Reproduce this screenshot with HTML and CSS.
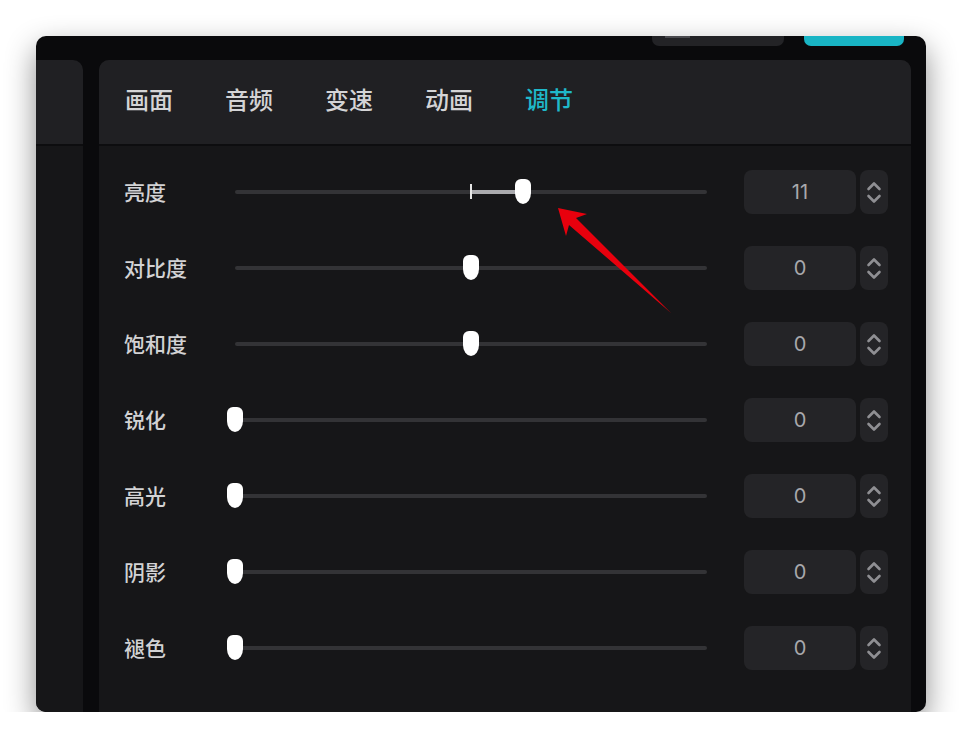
FILE: index.html
```html
<!DOCTYPE html>
<html lang="zh-CN">
<head>
    <meta charset="UTF-8">
    <title>调节</title>
    <link rel="stylesheet" href="styles.css">
</head>
<body>
    <div class="window">
        <div class="titlebar">
            <div class="tb-btn"><span class="tb-icon"></span></div>
            <div class="tb-btn primary"></div>
        </div>
        <div class="main">
            <aside class="side">
                <div class="side-head"></div>
                <div class="side-body"></div>
            </aside>
            <section class="panel">
                <nav class="tabs">
                    <div class="tab">画面</div>
                    <div class="tab">音频</div>
                    <div class="tab">变速</div>
                    <div class="tab">动画</div>
                    <div class="tab active">调节</div>
                </nav>
                <div class="rows">
                    <div class="row">
                        <span class="label">亮度</span>
                        <div class="slider">
                            <span class="fill" style="left: 50%; width: 11%;"></span>
                            <span class="tick"></span>
                            <span class="thumb" style="left: 61%;"></span>
                        </div>
                        <div class="num">11</div>
                        <div class="step">
                            <svg width="28" height="44" viewBox="0 0 28 44"><path d="M8.5 19 L14 13.5 L19.5 19 M8.5 26 L14 31.5 L19.5 26"/></svg>
                        </div>
                    </div>
                    <div class="row">
                        <span class="label">对比度</span>
                        <div class="slider"><span class="thumb" style="left: 50%;"></span></div>
                        <div class="num">0</div>
                        <div class="step">
                            <svg width="28" height="44" viewBox="0 0 28 44"><path d="M8.5 19 L14 13.5 L19.5 19 M8.5 26 L14 31.5 L19.5 26"/></svg>
                        </div>
                    </div>
                    <div class="row">
                        <span class="label">饱和度</span>
                        <div class="slider"><span class="thumb" style="left: 50%;"></span></div>
                        <div class="num">0</div>
                        <div class="step">
                            <svg width="28" height="44" viewBox="0 0 28 44"><path d="M8.5 19 L14 13.5 L19.5 19 M8.5 26 L14 31.5 L19.5 26"/></svg>
                        </div>
                    </div>
                    <div class="row">
                        <span class="label">锐化</span>
                        <div class="slider"><span class="thumb" style="left: 0%;"></span></div>
                        <div class="num">0</div>
                        <div class="step">
                            <svg width="28" height="44" viewBox="0 0 28 44"><path d="M8.5 19 L14 13.5 L19.5 19 M8.5 26 L14 31.5 L19.5 26"/></svg>
                        </div>
                    </div>
                    <div class="row">
                        <span class="label">高光</span>
                        <div class="slider"><span class="thumb" style="left: 0%;"></span></div>
                        <div class="num">0</div>
                        <div class="step">
                            <svg width="28" height="44" viewBox="0 0 28 44"><path d="M8.5 19 L14 13.5 L19.5 19 M8.5 26 L14 31.5 L19.5 26"/></svg>
                        </div>
                    </div>
                    <div class="row">
                        <span class="label">阴影</span>
                        <div class="slider"><span class="thumb" style="left: 0%;"></span></div>
                        <div class="num">0</div>
                        <div class="step">
                            <svg width="28" height="44" viewBox="0 0 28 44"><path d="M8.5 19 L14 13.5 L19.5 19 M8.5 26 L14 31.5 L19.5 26"/></svg>
                        </div>
                    </div>
                    <div class="row">
                        <span class="label">褪色</span>
                        <div class="slider"><span class="thumb" style="left: 0%;"></span></div>
                        <div class="num">0</div>
                        <div class="step">
                            <svg width="28" height="44" viewBox="0 0 28 44"><path d="M8.5 19 L14 13.5 L19.5 19 M8.5 26 L14 31.5 L19.5 26"/></svg>
                        </div>
                    </div>
                </div>
            </section>
        </div>
        <!-- annotation arrow pointing at the brightness thumb -->
        <svg class="arrow" width="962" height="748" viewBox="0 0 962 748">
            <polygon points="558,208 587,214 576,218 671,313 569,225 566,236"/>
        </svg>
    </div>
</body>
</html>
```

FILE: styles.css
```css
body {
    margin: 0;
    padding: 36px 0 0 36px;
    background-color: #fff;
    font-family: "Noto Sans CJK SC", "Noto Sans", sans-serif;
}
.window {
    width: 890px;
    height: 676px;
    background-color: #0a0a0c;
    border-radius: 10px;
    overflow: hidden;
    display: flex;
    flex-direction: column;
    box-shadow: 0 12px 30px rgba(0, 0, 0, 0.45);
}
.titlebar {
    height: 24px;
    display: flex;
    justify-content: flex-end;
    gap: 20px;
    padding-right: 22px;
    flex-shrink: 0;
}
.tb-btn {
    width: 132px;
    height: 10px;
    background-color: #232326;
    border-radius: 0 0 7px 7px;
    padding-left: 13px;
    box-sizing: border-box;
}
.tb-icon {
    display: block;
    width: 25px;
    height: 2px;
    background-color: #4a4a4e;
}
.tb-btn.primary {
    width: 100px;
    background-color: #19b5c5;
}
.main {
    flex: 1;
    display: flex;
    gap: 16px;
    padding-right: 15px;
}
.side {
    width: 47px;
    display: flex;
    flex-direction: column;
    border-top-right-radius: 10px;
    overflow: hidden;
}
.side-head {
    height: 84px;
    background-color: #202023;
    border-bottom: 2px solid #0d0d0f;
}
.side-body {
    flex: 1;
    background-color: #161618;
}
.panel {
    flex: 1;
    display: flex;
    flex-direction: column;
    border-radius: 10px 10px 0 0;
    overflow: hidden;
    background-color: #161618;
}
.tabs {
    height: 86px;
    display: flex;
    align-items: center;
    padding: 0 0 8px 26px;
    box-sizing: border-box;
    background-color: #202023;
    border-bottom: 2px solid #0d0d0f;
}
.tab {
    width: 100px;
    font-size: 24px;
    font-weight: 500;
    color: #d4d4d6;
}
.tab.active {
    color: #1fb8c9;
}
.rows {
    display: flex;
    flex-direction: column;
    gap: 32px;
    padding: 24px 0 0 25px;
}
.row {
    height: 44px;
    display: flex;
    align-items: center;
}
.label {
    width: 111px;
    font-size: 21px;
    font-weight: 500;
    color: #d2d2d4;
    margin-top: -2px;
}
.slider {
    position: relative;
    width: 472px;
    height: 4px;
    background-color: #333336;
    border-radius: 2px;
}
.fill {
    position: absolute;
    top: 0;
    height: 4px;
    background-color: #aaaaae;
}
.tick {
    position: absolute;
    left: 50%;
    top: -6px;
    width: 2px;
    height: 15px;
    margin-left: -1px;
    background-color: #e6e6e6;
}
.thumb {
    position: absolute;
    top: -11px;
    width: 16px;
    height: 25px;
    margin-left: -8px;
    background-color: #fff;
    border-radius: 6px 6px 8px 8px / 6px 6px 11px 11px;
}
.num {
    width: 112px;
    height: 44px;
    margin-left: 37px;
    border-radius: 8px;
    background-color: #242427;
    color: #a8a8ac;
    font-family: Inter, "Noto Sans", sans-serif;
    font-size: 20px;
    line-height: 44px;
    text-align: center;
}
.step {
    width: 28px;
    height: 44px;
    margin-left: 4px;
    border-radius: 8px;
    background-color: #242427;
}
.step svg {
    display: block;
}
.step path {
    fill: none;
    stroke: #8f8f93;
    stroke-width: 2.6;
    stroke-linecap: round;
    stroke-linejoin: round;
}
.arrow {
    position: absolute;
    left: 0;
    top: 0;
    pointer-events: none;
}
.arrow polygon {
    fill: #e8000d;
}
```
